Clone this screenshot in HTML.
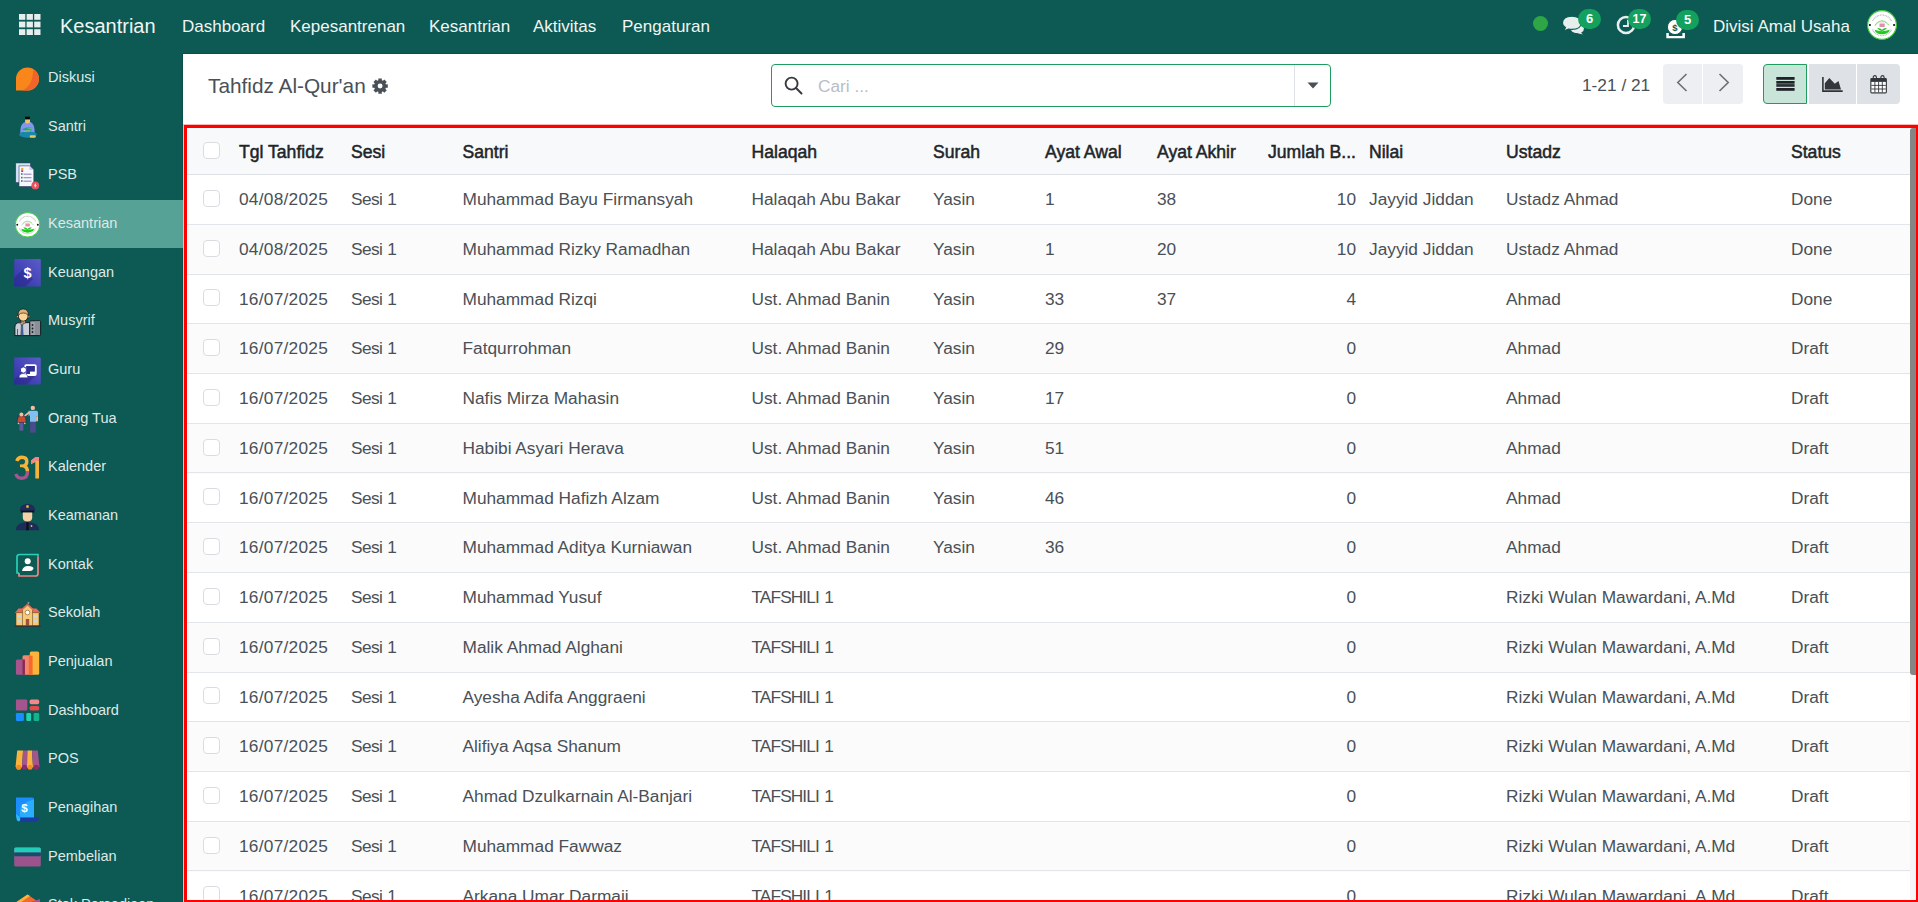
<!DOCTYPE html>
<html><head><meta charset="utf-8"><style>
*{box-sizing:border-box}
html,body{margin:0;padding:0}
body{width:1918px;height:902px;overflow:hidden;position:relative;font-family:"Liberation Sans",sans-serif;background:#fff;color:#495057}
.a{position:absolute;white-space:nowrap}
.nav{position:absolute;left:0;top:0;width:1918px;height:54px;background:#0d5953}
.nt{position:absolute;top:1px;height:53px;line-height:51px;color:#f0f5f4;font-size:17px}
.side{position:absolute;left:0;top:54px;width:183px;height:848px;background:#0d5953;overflow:hidden}
.si{position:absolute;left:0;width:183px;height:48.67px}
.si .ic{position:absolute;left:14px;top:9.5px;width:27px;height:27px}
.si .tx{position:absolute;left:48px;top:0px;line-height:47px;font-size:14.5px;color:#dfe9e7}
.si.act{background:#57a296;height:48px}
.cell{position:absolute;font-size:17.3px;color:#495057;line-height:20px}
.hd{position:absolute;font-size:17.6px;font-weight:normal;-webkit-text-stroke:0.5px #212529;color:#212529;line-height:20px}
.cb{position:absolute;left:203px;width:17px;height:17px;border:1px solid #d9dde2;border-radius:4px;background:#fff}
.badge{position:absolute;height:20px;border-radius:10px;background:#14a05d;color:#fff;font-size:13px;font-weight:bold;line-height:20px;text-align:center}
</style></head><body>

<div class="nav">
<svg class="a" style="left:19px;top:14px" width="22" height="21" viewBox="0 0 22 21"><rect x="0" y="0" width="6.3" height="5.8" fill="#e6efed"/><rect x="7.6" y="0" width="6.3" height="5.8" fill="#e6efed"/><rect x="15.2" y="0" width="6.3" height="5.8" fill="#e6efed"/><rect x="0" y="7.6" width="6.3" height="5.8" fill="#e6efed"/><rect x="7.6" y="7.6" width="6.3" height="5.8" fill="#e6efed"/><rect x="15.2" y="7.6" width="6.3" height="5.8" fill="#e6efed"/><rect x="0" y="15.2" width="6.3" height="5.8" fill="#e6efed"/><rect x="7.6" y="15.2" width="6.3" height="5.8" fill="#e6efed"/><rect x="15.2" y="15.2" width="6.3" height="5.8" fill="#e6efed"/></svg>
<div class="nt" style="left:60px;top:0px;font-size:20px;line-height:52px">Kesantrian</div>
<div class="nt" style="left:182px">Dashboard</div>
<div class="nt" style="left:290px">Kepesantrenan</div>
<div class="nt" style="left:429px">Kesantrian</div>
<div class="nt" style="left:533px">Aktivitas</div>
<div class="nt" style="left:622px">Pengaturan</div>
<div class="a" style="left:1533px;top:16px;width:15px;height:15px;border-radius:50%;background:#2fa645"></div>
<svg class="a" style="left:1561px;top:15px" width="26" height="22" viewBox="0 0 26 22"><path d="M9 13 Q9 8.5 16 8.5 Q23.5 8.5 23.5 13.5 Q23.5 16.5 21 17.8 L24 20.5 L16.5 18.8 Q9 18.5 9 13Z" fill="#e6efed" stroke="#0d5953" stroke-width="1.1"/><path d="M1.5 8 Q1.5 1.3 10.8 1.3 Q20 1.3 20 8 Q20 14.4 10.8 14.4 Q9 14.4 7.5 14 L2.5 16 L4.5 12.6 Q1.5 11 1.5 8Z" fill="#e6efed" stroke="#0d5953" stroke-width="1.1"/></svg>
<div class="badge" style="left:1578px;top:9px;width:23px">6</div>
<svg class="a" style="left:1616px;top:15px" width="20" height="20" viewBox="0 0 20 20"><circle cx="10" cy="10" r="8.1" fill="none" stroke="#e6efed" stroke-width="2.5"/><path d="M12 4.8 V11 H7" stroke="#e6efed" stroke-width="1.8" fill="none"/></svg>
<div class="badge" style="left:1628px;top:9px;width:23px;font-size:12.5px">17</div>
<svg class="a" style="left:1665px;top:19px" width="21" height="20" viewBox="0 0 21 20"><path d="M1.3 14 V19 Q1.3 19.3 1.8 19.3 H19.4 Q19.9 19.3 19.9 19 V14 H17.4 V16.9 H3.8 V14Z" fill="#fff"/><circle cx="10" cy="8" r="7.6" fill="#fff" stroke="#0d5953" stroke-width="1"/><text x="10" y="11.5" font-family="Liberation Sans" font-size="9.5" font-weight="bold" fill="#0d5953" text-anchor="middle">$</text></svg>
<div class="badge" style="left:1676px;top:10px;width:23px">5</div>
<div class="nt" style="left:1713px">Divisi Amal Usaha</div>
<svg class="a" style="left:1867px;top:9.5px" width="30" height="30" viewBox="0 0 30 30"><circle cx="15" cy="15" r="14.4" fill="#fff" stroke="#3ec93e" stroke-width="1.1"/><path d="M5.5 11 A10.5 10.5 0 0 1 24.5 11" fill="none" stroke="#9a9a9a" stroke-width="1.3" stroke-dasharray="0.9 0.7" opacity=".7"/><path d="M5.5 19.5 A10.5 10.5 0 0 0 24.5 19.5" fill="none" stroke="#9a9a9a" stroke-width="1.3" stroke-dasharray="0.9 0.7" opacity=".7"/><circle cx="2.9" cy="15" r="1.1" fill="#111"/><circle cx="27.1" cy="15" r="1.1" fill="#111"/><path d="M8 15.5 Q15 6.5 22 15.5" fill="none" stroke="#6fd86f" stroke-width="1.1" stroke-dasharray="1.2 .5"/><path d="M9.5 13 Q15 8.5 20.5 13" fill="none" stroke="#9fe39f" stroke-width=".8"/><rect x="12.5" y="13.6" width="5.2" height="3.4" fill="#e07aa0" opacity=".85"/><rect x="13" y="12.5" width="4.2" height="1.2" fill="#f2c6d6"/><path d="M10 17.8 Q15 18.5 15 20.5 Q15 18.5 20 17.8 Q18.5 20.5 15 21.3 Q11.5 20.5 10 17.8Z" fill="#22c922"/><path d="M7.7 19.8 Q15 22.5 22.8 19.8 Q21.5 24.2 15 24.3 Q8.5 24.2 7.7 19.8Z" fill="#1ecb1e"/></svg>
</div>
<div class="side"><div class="a" style="left:182px;top:0;width:1px;height:848px;background:#0a4f49"></div>
<div class="si" style="top:0.00px"><div class="ic"><svg width="27" height="27" viewBox="0 0 27 27" style="overflow:visible"><path d="M2 26.5 L2 15 A11.5 11.5 0 1 1 13.5 26.5 Z" fill="#f8861a"/><path d="M19.2 5 A11.5 11.5 0 0 1 13.5 26.5 L8 26.5 Q19 22 19.2 5Z" fill="#f2652a"/></svg></div><div class="tx">Diskusi</div></div>
<div class="si" style="top:48.67px"><div class="ic"><svg width="27" height="27" viewBox="0 0 27 27" style="overflow:visible"><path d="M6.3 21.5 Q6 11.2 11.2 9.9 H16.3 Q20.8 11.2 20.7 21.5Z" fill="#8296f0"/><rect x="11" y="4.7" width="4.8" height="2.9" fill="#050505"/><path d="M11.1 7.5 H16 V10.6 Q13.6 12.6 11.1 10.6Z" fill="#f0c466"/><path d="M7.7 17.3 L12.3 15.5 L18.3 15.8 L17.3 18.6 L12 18.8Z" fill="#2c9f7e"/><path d="M12.5 16.2 L18 15.9 L17.5 17.5Z" fill="#5cc48a"/><path d="M9.8 19.3 Q12 18.2 15.9 18.6 L15.5 20.9 H10.5Z" fill="#e8c460"/><ellipse cx="14" cy="22.6" rx="8.9" ry="3.2" fill="#1887a8"/><rect x="15.7" y="23.2" width="6.1" height="2.6" rx="1.1" fill="#e6c766"/></svg></div><div class="tx">Santri</div></div>
<div class="si" style="top:97.34px"><div class="ic"><svg width="27" height="27" viewBox="0 0 27 27" style="overflow:visible"><rect x="1.8" y="2" width="14.5" height="19.5" fill="#d5e6f6" stroke="#3a396a" stroke-width=".5"/><path d="M5 4.8 H15.5 L19.8 9 V25.5 H5Z" fill="#f6f6fc" stroke="#3a396a" stroke-width=".6"/><path d="M15.5 4.8 V9 H19.8Z" fill="#c8c8e8"/><circle cx="8.2" cy="8" r="1.3" fill="#e2b22a"/><rect x="7.2" y="9.3" width="2" height="1.6" fill="#b03355"/><rect x="7" y="12.2" width="1.6" height="1.6" fill="#3a7a6a"/><rect x="9.5" y="12.7" width="8" height=".9" fill="#7a70b0"/><rect x="7" y="15.8" width="1.6" height="1.6" fill="#3a7a6a"/><rect x="9.5" y="16.3" width="8" height=".9" fill="#7a70b0"/><rect x="7" y="19.2" width="1.6" height="1.6" fill="#3a7a6a"/><rect x="9.5" y="19.7" width="8" height=".9" fill="#7a70b0"/><circle cx="21.3" cy="24.4" r="3.9" fill="#e9515e"/><path d="M21.3 22 L22.4 24.4 L21.3 26.8 L20.2 24.4Z" fill="#dfe0f0"/></svg></div><div class="tx">PSB</div></div>
<div class="si act" style="top:146.01px"><div class="ic"><svg width="27" height="27" viewBox="0 0 27 27" style="overflow:visible"><g transform="translate(0.8 2) scale(0.85)"><circle cx="15" cy="15" r="14.4" fill="#fff" stroke="#3ec93e" stroke-width="1.1"/><path d="M5.5 11 A10.5 10.5 0 0 1 24.5 11" fill="none" stroke="#9a9a9a" stroke-width="1.3" stroke-dasharray="0.9 0.7" opacity=".7"/><path d="M5.5 19.5 A10.5 10.5 0 0 0 24.5 19.5" fill="none" stroke="#9a9a9a" stroke-width="1.3" stroke-dasharray="0.9 0.7" opacity=".7"/><circle cx="2.9" cy="15" r="1.1" fill="#111"/><circle cx="27.1" cy="15" r="1.1" fill="#111"/><path d="M8 15.5 Q15 6.5 22 15.5" fill="none" stroke="#6fd86f" stroke-width="1.1" stroke-dasharray="1.2 .5"/><path d="M9.5 13 Q15 8.5 20.5 13" fill="none" stroke="#9fe39f" stroke-width=".8"/><rect x="12.5" y="13.6" width="5.2" height="3.4" fill="#e07aa0" opacity=".85"/><rect x="13" y="12.5" width="4.2" height="1.2" fill="#f2c6d6"/><path d="M10 17.8 Q15 18.5 15 20.5 Q15 18.5 20 17.8 Q18.5 20.5 15 21.3 Q11.5 20.5 10 17.8Z" fill="#22c922"/><path d="M7.7 19.8 Q15 22.5 22.8 19.8 Q21.5 24.2 15 24.3 Q8.5 24.2 7.7 19.8Z" fill="#1ecb1e"/></g></svg></div><div class="tx">Kesantrian</div></div>
<div class="si" style="top:194.68px"><div class="ic"><svg width="27" height="27" viewBox="0 0 27 27" style="overflow:visible"><defs><linearGradient id="gk" x1="0" y1="1" x2="1" y2="0"><stop offset="0" stop-color="#3333aa"/><stop offset="1" stop-color="#5b5bc9"/></linearGradient></defs><rect x="0.2" y="1" width="26.6" height="27.5" rx="1" fill="url(#gk)"/><path d="M0.2 20 L9 11 L19 21 L11.5 28.5 L0.2 28.5Z" fill="#28288a" opacity=".55"/><text x="13.5" y="20.3" font-family="Liberation Sans" font-weight="bold" font-size="14.5" fill="#fff" text-anchor="middle">$</text></svg></div><div class="tx">Keuangan</div></div>
<div class="si" style="top:243.35px"><div class="ic"><svg width="27" height="27" viewBox="0 0 27 27" style="overflow:visible"><path d="M0.9 28.6 V20.5 Q0.9 15.6 5.5 15.6 H15.8 V28.6Z" fill="#c9cdd7" stroke="#111" stroke-width=".9"/><path d="M5.5 15.6 L8 19 L10.5 15.6Z" fill="#eef0f4" stroke="#111" stroke-width=".5"/><path d="M7.4 17.5 H8.6 L9.2 28.5 H6.8Z" fill="#4d72b3" stroke="#111" stroke-width=".4"/><path d="M3.5 22 V28.6" stroke="#111" stroke-width=".6"/><rect x="15.8" y="13.8" width="10.8" height="14.8" rx=".8" fill="#9ba1ab" stroke="#111" stroke-width=".9"/><rect x="21" y="14.5" width="5" height="13.5" fill="#8a9099"/><circle cx="18.5" cy="18" r=".9" fill="#222"/><circle cx="18.5" cy="21.5" r=".9" fill="#222"/><circle cx="18.5" cy="25" r=".9" fill="#222"/><rect x="7" y="12.5" width="4.5" height="3.5" fill="#f6c48a" stroke="#111" stroke-width=".6"/><circle cx="4" cy="9.5" r="1.3" fill="#f6c48a" stroke="#111" stroke-width=".5"/><circle cx="14.4" cy="9.5" r="1.3" fill="#f6c48a" stroke="#111" stroke-width=".5"/><ellipse cx="9.2" cy="8.6" rx="5" ry="5.6" fill="#f9d39a" stroke="#111" stroke-width=".9"/><path d="M4.2 8.5 Q3.8 2 9.2 2 Q14.6 2 14.2 8.5 Q12 5.5 9.2 6 Q6.4 5.5 4.2 8.5Z" fill="#e2b27c" stroke="#111" stroke-width=".6"/></svg></div><div class="tx">Musyrif</div></div>
<div class="si" style="top:292.02px"><div class="ic"><svg width="27" height="27" viewBox="0 0 27 27" style="overflow:visible"><defs><linearGradient id="gg" x1="0" y1="1" x2="1" y2="0"><stop offset="0" stop-color="#3232aa"/><stop offset="1" stop-color="#5b5bc9"/></linearGradient></defs><rect x="0.2" y="1.4" width="26.6" height="27" rx="1" fill="url(#gg)"/><path d="M0.2 24 L5 19 L8 13 L11 9 L21.8 9 V19.2 L12.8 28.4 H0.2Z" fill="#262680" opacity=".5"/><rect x="11.2" y="9.1" width="10.6" height="9.9" rx="1" fill="#2f2f95" stroke="#fff" stroke-width="1.8"/><rect x="16" y="15.6" width="5.2" height="3.3" fill="#fff"/><circle cx="9.4" cy="14" r="3.1" fill="#fff" stroke="#3838a8" stroke-width="1"/><path d="M5 21.8 Q5 17.6 9.4 17.6 Q13.8 17.6 13.8 21.8Z" fill="#fff" stroke="#3838a8" stroke-width=".6"/></svg></div><div class="tx">Guru</div></div>
<div class="si" style="top:340.69px"><div class="ic"><svg width="27" height="27" viewBox="0 0 27 27" style="overflow:visible"><circle cx="18.8" cy="3.9" r="2.2" fill="#f8bba0"/><rect x="16.1" y="17.6" width="5.7" height="11.1" fill="#4a4a8c"/><path d="M14.5 6.8 H22.5 Q24 6.8 24 8.5 V12 H22.2 V17.8 H16 V11 L14.5 12.5Z" fill="#7fc0f5"/><rect x="22.2" y="12" width="1.8" height="5.4" rx=".8" fill="#f8bba0"/><path d="M15 8.5 L9.5 12.8" stroke="#f8bba0" stroke-width="1.6" stroke-linecap="round"/><rect x="5.4" y="18" width="3.9" height="8.7" fill="#5a5a9c"/><path d="M4.5 12 H11 L12.2 17 L11.5 18.5 H3.8 L3.1 17Z" fill="#c94c2c" stroke="#1d2a5a" stroke-width=".6"/><circle cx="7.4" cy="10.4" r="2" fill="#f8bba0"/><circle cx="4.5" cy="19.4" r=".8" fill="#f8bba0"/><circle cx="10.8" cy="19.4" r=".8" fill="#f8bba0"/></svg></div><div class="tx">Orang Tua</div></div>
<div class="si" style="top:389.36px"><div class="ic"><svg width="27" height="27" viewBox="0 0 27 27" style="overflow:visible"><path d="M2.8 8 Q4 4.2 8 4.2 Q12.8 4.2 12.8 8.7 Q12.8 11.6 10 13 Q13.5 14.2 13.5 18.5" fill="none" stroke="#f6b33a" stroke-width="3.4"/><path d="M13.5 18.5 Q13.5 25.2 7.8 25.2 Q3 25.2 1.9 20.8" fill="none" stroke="#a7548f" stroke-width="3.4"/><path d="M6 12.8 H9.5" stroke="#f6b33a" stroke-width="2.8"/><path d="M17 7.5 L21.3 4.2 H25 V25.4 H21.3 V9 L17 11.2Z" fill="#f6b33a"/><path d="M17 7.5 L21.3 4.2 H25 V8 H21.3 L17 11.2Z" fill="#f2858a"/></svg></div><div class="tx">Kalender</div></div>
<div class="si" style="top:438.03px"><div class="ic"><svg width="27" height="27" viewBox="0 0 27 27" style="overflow:visible"><path d="M6 9 Q5 3 13.5 1.7 Q22 3 21 9Z" fill="#1d2c5b"/><rect x="12.3" y="3.2" width="2.4" height="2.6" rx=".6" fill="#f5c332"/><rect x="6.8" y="8.6" width="13.4" height="2" fill="#111"/><path d="M8.8 10.6 H18.2 V15.5 Q18.2 19.5 13.5 19.5 Q8.8 19.5 8.8 15.5Z" fill="#f6d0a7"/><path d="M1.7 28.2 Q2 20.5 13.5 20 Q25 20.5 25.2 28.2Z" fill="#1d2c5b"/><path d="M12.5 20 H14.5 L14.8 28.2 H12.2Z" fill="#111"/><circle cx="17.5" cy="24" r=".9" fill="#f5c332"/></svg></div><div class="tx">Keamanan</div></div>
<div class="si" style="top:486.70px"><div class="ic"><svg width="27" height="27" viewBox="0 0 27 27" style="overflow:visible"><path d="M24 6.5 V4.5 H5.5 Q3 4.5 3 7 V23 H5" fill="none" stroke="#27d0b9" stroke-width="1.7"/><path d="M24 6.5 V23.5 Q24 26 21.5 26 H5 V23" fill="none" stroke="#f28383" stroke-width="1.7"/><circle cx="13.7" cy="11.3" r="3" fill="#fff"/><path d="M8 21 Q9 16 14 16 Q19.5 16 19.5 18.5 Q18.5 21 16 21Z" fill="#fff"/></svg></div><div class="tx">Kontak</div></div>
<div class="si" style="top:535.37px"><div class="ic"><svg width="27" height="27" viewBox="0 0 27 27" style="overflow:visible"><path d="M0.8 14 L4.5 9.5 H22.5 L26.5 14Z" fill="#e96b5b"/><rect x="2" y="13.8" width="23" height="13" fill="#f6ca72" stroke="#5a3a20" stroke-width=".5"/><path d="M8.5 10.5 L13.5 6 L18.5 10.5 V26.8 H8.5Z" fill="#f6ca72" stroke="#5a3a20" stroke-width=".5"/><path d="M7.5 11 L13.5 5.5 L19.5 11" fill="none" stroke="#e96b5b" stroke-width="1.6"/><path d="M13.5 6 V2.8 L16 3.5" stroke="#555" stroke-width=".6" fill="#9ab"/><circle cx="13.5" cy="13.5" r="2.3" fill="#fff" stroke="#5a3a20" stroke-width=".5"/><rect x="11.8" y="20" width="3.4" height="6.8" fill="#9b5141"/><rect x="3.5" y="16" width="3.5" height="2.4" fill="#ccd6df"/><rect x="20" y="16" width="3.5" height="2.4" fill="#ccd6df"/><rect x="3.5" y="20.8" width="3.5" height="2.4" fill="#ccd6df"/><rect x="20" y="20.8" width="3.5" height="2.4" fill="#ccd6df"/><rect x="0.5" y="26.6" width="26.2" height="1.3" fill="#333"/></svg></div><div class="tx">Sekolah</div></div>
<div class="si" style="top:584.04px"><div class="ic"><svg width="27" height="27" viewBox="0 0 27 27" style="overflow:visible"><rect x="15.8" y="3.4" width="9.4" height="23.3" rx="1.5" fill="#fbb33c"/><rect x="8.5" y="7.3" width="9.5" height="19.4" rx="1.5" fill="#f4866f"/><rect x="14.8" y="7.8" width="3.8" height="18.9" fill="#f36b2b"/><rect x="1.9" y="11.5" width="9" height="15.2" rx="1.5" fill="#a5548e"/><rect x="8.5" y="11.5" width="2.4" height="15.2" fill="#8b2b4b"/></svg></div><div class="tx">Penjualan</div></div>
<div class="si" style="top:632.71px"><div class="ic"><svg width="27" height="27" viewBox="0 0 27 27" style="overflow:visible"><rect x="1.9" y="3.6" width="11.4" height="11" rx="1" fill="#a5548e"/><rect x="15.6" y="3.6" width="9.6" height="4.6" rx="1.6" fill="#f28a8b"/><rect x="15.6" y="10" width="9.6" height="4.6" rx="1.6" fill="#e64a4b"/><rect x="1.9" y="17" width="8" height="8" rx="1.2" fill="#1a8dff"/><rect x="12.3" y="17" width="4.8" height="8" rx="1.2" fill="#20d2b3"/><rect x="19.6" y="17" width="5.6" height="8" rx="1.2" fill="#13b48b"/></svg></div><div class="tx">Dashboard</div></div>
<div class="si" style="top:681.38px"><div class="ic"><svg width="27" height="27" viewBox="0 0 27 27" style="overflow:visible"><path d="M3.2 5.4 H9 L8 22 Q5 25 1.5 22Z" fill="#fbb33c"/><path d="M9 5.4 H13.5 L13 22 Q10.5 25 8 22Z" fill="#a5548e"/><path d="M13.5 5.4 H18 L19 22 Q16 25 13 22Z" fill="#fbb33c"/><path d="M18 5.4 H23.8 L25.5 22 Q22 25 19 22Z" fill="#a5548e"/><circle cx="4.7" cy="22.3" r="2.6" fill="#f58b22"/><circle cx="10.5" cy="22.3" r="2.5" fill="#8b2b6b"/><circle cx="16" cy="22.3" r="2.5" fill="#f58b22"/><circle cx="22.3" cy="22.3" r="2.6" fill="#8b2b6b"/></svg></div><div class="tx">POS</div></div>
<div class="si" style="top:730.05px"><div class="ic"><svg width="27" height="27" viewBox="0 0 27 27" style="overflow:visible"><path d="M2 3.4 H18.5 Q20 3.4 20 5 V23.5 H6 Q2 23.5 2 20Z" fill="#1a8dff"/><path d="M20 5.5 Q9 8 6 15 V24 H20Z" fill="#2fbaff" opacity=".75"/><path d="M6 23.5 H25.2 L24.5 26 Q23.5 27.4 21 27.4 H5 Q6.5 26 6 23.5Z" fill="#1b3ba2"/><path d="M2 20 Q2 27.4 5 27.4 Q7 26 6 23.5Z" fill="#2fbaff"/><text x="10.5" y="17.8" font-family="Liberation Sans" font-weight="bold" font-size="11.5" fill="#fff" text-anchor="middle">$</text></svg></div><div class="tx">Penagihan</div></div>
<div class="si" style="top:778.72px"><div class="ic"><svg width="27" height="27" viewBox="0 0 27 27" style="overflow:visible"><rect x="0.2" y="5.5" width="26.6" height="18.9" rx="1.5" fill="#9c538c"/><path d="M0.2 7 Q0.2 5.5 1.7 5.5 H25.3 Q26.8 5.5 26.8 7 V10.5 H0.2Z" fill="#20cfb9"/><path d="M0.2 10.5 H26.8 V13.5 Q26.8 14.2 26 14.2 H1 Q0.2 14.2 0.2 13.5Z" fill="#0e506b"/></svg></div><div class="tx">Pembelian</div></div>
<div class="si" style="top:827.39px"><div class="ic"><svg width="27" height="27" viewBox="0 0 27 27" style="overflow:visible"><path d="M1 12 L13.5 3.4 L26 12 L13.5 20Z" fill="#f26b2b"/><path d="M1 12 L13.5 3.4 L16 5 L3.5 13.6Z" fill="#fbb33c"/><path d="M13.5 12 L26 8 V26 H13.5Z" fill="#a5548e"/></svg></div><div class="tx">Stok Persediaan</div></div>
</div>
<div class="a" style="left:182px;top:53px;width:1736px;height:1px;background:#0a4f49"></div>
<div class="a" style="left:208px;top:72px;font-size:20.8px;line-height:28px;color:#495057">Tahfidz Al-Qur'an</div>
<svg class="a" style="left:371.8px;top:78px" width="16.2" height="16.2" viewBox="0 0 17 17"><path fill="#495057" d="M14.24 6.75 L16.59 6.63 L16.59 10.37 L14.24 10.25 L13.80 11.32 L15.54 12.90 L12.90 15.54 L11.32 13.80 L10.25 14.24 L10.37 16.59 L6.63 16.59 L6.75 14.24 L5.68 13.80 L4.10 15.54 L1.46 12.90 L3.20 11.32 L2.76 10.25 L0.41 10.37 L0.41 6.63 L2.76 6.75 L3.20 5.68 L1.46 4.10 L4.10 1.46 L5.68 3.20 L6.75 2.76 L6.63 0.41 L10.37 0.41 L10.25 2.76 L11.32 3.20 L12.90 1.46 L15.54 4.10 L13.80 5.68Z"/><circle cx="8.5" cy="8.5" r="6.3" fill="#495057"/><circle cx="8.5" cy="8.5" r="2.6" fill="#fff"/></svg>
<div class="a" style="left:771px;top:64px;width:560px;height:43px;border:1px solid #1f9d5f;border-radius:4px;background:#fff"></div>
<div class="a" style="left:1294px;top:65px;width:1px;height:41px;background:#dee2e6"></div>
<svg class="a" style="left:784px;top:76px" width="19" height="19" viewBox="0 0 19 19"><circle cx="7.6" cy="7.6" r="6" fill="none" stroke="#343a40" stroke-width="1.9"/><path d="M12 12 L17.5 17.5" stroke="#343a40" stroke-width="2" stroke-linecap="round"/></svg>
<div class="a" style="left:818px;top:75px;font-size:17.3px;line-height:22px;color:#b7bec6">Cari ...</div>
<svg class="a" style="left:1307px;top:82px" width="12" height="7" viewBox="0 0 12 7"><path d="M0.5 0.5 H11.5 L6 6.5Z" fill="#495057"/></svg>
<div class="a" style="left:1582px;top:74px;font-size:17.3px;line-height:22px;color:#495057">1-21 / 21</div>
<div class="a" style="left:1663px;top:64px;width:39px;height:40px;background:#edeff2;border-radius:4px 0 0 4px"></div>
<div class="a" style="left:1703px;top:64px;width:40px;height:40px;background:#edeff2;border-radius:0 4px 4px 0"></div>
<svg class="a" style="left:1676px;top:73px" width="12" height="19" viewBox="0 0 12 19"><path d="M10.5 1 L1.8 9.5 L10.5 18" fill="none" stroke="#6c6f73" stroke-width="1.6"/></svg>
<svg class="a" style="left:1717.5px;top:73px" width="12" height="19" viewBox="0 0 12 19"><path d="M1.5 1 L10.2 9.5 L1.5 18" fill="none" stroke="#6c6f73" stroke-width="1.6"/></svg>
<div class="a" style="left:1763px;top:64px;width:44px;height:40px;background:#c9e5da;border:1px solid #1f9d5f;border-radius:4px 0 0 4px"></div>
<div class="a" style="left:1809px;top:64px;width:47px;height:40px;background:#dee1e5"></div>
<div class="a" style="left:1857px;top:64px;width:43px;height:40px;background:#dee1e5;border-radius:0 4px 4px 0"></div>
<svg class="a" style="left:1776px;top:77px" width="19" height="14" viewBox="0 0 19 14"><rect x="0.3" y="0" width="18.3" height="2.8" fill="#1f2226"/><rect x="0.3" y="4" width="18.3" height="2.7" fill="#1f2226"/><rect x="0.3" y="7.1" width="18.3" height="2.7" fill="#2a2e33"/><rect x="0.3" y="11" width="18.3" height="2.8" fill="#1f2226"/></svg>
<svg class="a" style="left:1821px;top:76px" width="22" height="16" viewBox="0 0 22 16"><path d="M1.9 0.9 V15.1 H21.7" fill="none" stroke="#2f3338" stroke-width="1.6"/><path d="M3.8 13.6 V7.3 L8.3 2 L13.8 7.8 L17.5 5 L20 13.6Z" fill="#33373c"/></svg>
<svg class="a" style="left:1869px;top:75px" width="19" height="19" viewBox="0 0 19 19"><rect x="1.3" y="3.1" width="16.6" height="15.3" rx="1.3" fill="#33373c"/><rect x="2.4" y="6.9" width="14.4" height="10.4" fill="#fff"/><path d="M5.9 6.9 V17.3 M9.6 6.9 V17.3 M13.3 6.9 V17.3 M2.4 10.4 H16.8 M2.4 14 H16.8" stroke="#33373c" stroke-width=".9"/><rect x="4.2" y="0.6" width="3.2" height="4.8" rx="1.6" fill="none" stroke="#33373c" stroke-width="1.1"/><rect x="11.9" y="0.6" width="3.2" height="4.8" rx="1.6" fill="none" stroke="#33373c" stroke-width="1.1"/></svg>
<div class="a" style="left:187px;top:128px;width:1723px;height:46px;background:#f8f9fa"></div>
<div class="a" style="left:187px;top:174px;width:1723px;height:1px;background:#dee2e6"></div>
<div class="cb" style="top:142px"></div>
<div class="hd" style="left:239px;top:141.5px">Tgl Tahfidz</div>
<div class="hd" style="left:351px;top:141.5px">Sesi</div>
<div class="hd" style="left:462.5px;top:141.5px">Santri</div>
<div class="hd" style="left:751.5px;top:141.5px">Halaqah</div>
<div class="hd" style="left:933px;top:141.5px">Surah</div>
<div class="hd" style="left:1045px;top:141.5px">Ayat Awal</div>
<div class="hd" style="left:1157px;top:141.5px">Ayat Akhir</div>
<div class="hd" style="left:1268px;top:141.5px">Jumlah B...</div>
<div class="hd" style="left:1369px;top:141.5px">Nilai</div>
<div class="hd" style="left:1506px;top:141.5px">Ustadz</div>
<div class="hd" style="left:1791px;top:141.5px">Status</div>
<div class="a" style="left:187px;top:175.00px;width:1723px;height:49.75px;background:#fff"></div>
<div class="a" style="left:187px;top:224px;width:1723px;height:1px;background:#e2e5e9"></div>
<div class="cb" style="top:189.88px"></div>
<div class="cell" style="left:239px;top:189.07px;letter-spacing:0.25px">04/08/2025</div>
<div class="cell" style="left:351px;top:189.07px;letter-spacing:-0.6px;word-spacing:0.8px">Sesi 1</div>
<div class="cell" style="left:462.5px;top:189.07px">Muhammad Bayu Firmansyah</div>
<div class="cell" style="left:751.5px;top:189.07px">Halaqah Abu Bakar</div>
<div class="cell" style="left:933px;top:189.07px">Yasin</div>
<div class="cell" style="left:1045px;top:189.07px">1</div>
<div class="cell" style="left:1157px;top:189.07px">38</div>
<div class="cell" style="left:1200px;width:156px;text-align:right;top:189.07px">10</div>
<div class="cell" style="left:1369px;top:189.07px">Jayyid Jiddan</div>
<div class="cell" style="left:1506px;top:189.07px">Ustadz Ahmad</div>
<div class="cell" style="left:1791px;top:189.07px">Done</div>
<div class="a" style="left:187px;top:224.75px;width:1723px;height:49.75px;background:#fbfbfb"></div>
<div class="a" style="left:187px;top:274px;width:1723px;height:1px;background:#e2e5e9"></div>
<div class="cb" style="top:239.62px"></div>
<div class="cell" style="left:239px;top:238.82px;letter-spacing:0.25px">04/08/2025</div>
<div class="cell" style="left:351px;top:238.82px;letter-spacing:-0.6px;word-spacing:0.8px">Sesi 1</div>
<div class="cell" style="left:462.5px;top:238.82px">Muhammad Rizky Ramadhan</div>
<div class="cell" style="left:751.5px;top:238.82px">Halaqah Abu Bakar</div>
<div class="cell" style="left:933px;top:238.82px">Yasin</div>
<div class="cell" style="left:1045px;top:238.82px">1</div>
<div class="cell" style="left:1157px;top:238.82px">20</div>
<div class="cell" style="left:1200px;width:156px;text-align:right;top:238.82px">10</div>
<div class="cell" style="left:1369px;top:238.82px">Jayyid Jiddan</div>
<div class="cell" style="left:1506px;top:238.82px">Ustadz Ahmad</div>
<div class="cell" style="left:1791px;top:238.82px">Done</div>
<div class="a" style="left:187px;top:274.50px;width:1723px;height:49.75px;background:#fff"></div>
<div class="a" style="left:187px;top:323px;width:1723px;height:1px;background:#e2e5e9"></div>
<div class="cb" style="top:289.38px"></div>
<div class="cell" style="left:239px;top:288.57px;letter-spacing:0.25px">16/07/2025</div>
<div class="cell" style="left:351px;top:288.57px;letter-spacing:-0.6px;word-spacing:0.8px">Sesi 1</div>
<div class="cell" style="left:462.5px;top:288.57px">Muhammad Rizqi</div>
<div class="cell" style="left:751.5px;top:288.57px">Ust. Ahmad Banin</div>
<div class="cell" style="left:933px;top:288.57px">Yasin</div>
<div class="cell" style="left:1045px;top:288.57px">33</div>
<div class="cell" style="left:1157px;top:288.57px">37</div>
<div class="cell" style="left:1200px;width:156px;text-align:right;top:288.57px">4</div>
<div class="cell" style="left:1506px;top:288.57px">Ahmad</div>
<div class="cell" style="left:1791px;top:288.57px">Done</div>
<div class="a" style="left:187px;top:324.25px;width:1723px;height:49.75px;background:#fbfbfb"></div>
<div class="a" style="left:187px;top:373px;width:1723px;height:1px;background:#e2e5e9"></div>
<div class="cb" style="top:339.12px"></div>
<div class="cell" style="left:239px;top:338.32px;letter-spacing:0.25px">16/07/2025</div>
<div class="cell" style="left:351px;top:338.32px;letter-spacing:-0.6px;word-spacing:0.8px">Sesi 1</div>
<div class="cell" style="left:462.5px;top:338.32px">Fatqurrohman</div>
<div class="cell" style="left:751.5px;top:338.32px">Ust. Ahmad Banin</div>
<div class="cell" style="left:933px;top:338.32px">Yasin</div>
<div class="cell" style="left:1045px;top:338.32px">29</div>
<div class="cell" style="left:1200px;width:156px;text-align:right;top:338.32px">0</div>
<div class="cell" style="left:1506px;top:338.32px">Ahmad</div>
<div class="cell" style="left:1791px;top:338.32px">Draft</div>
<div class="a" style="left:187px;top:374.00px;width:1723px;height:49.75px;background:#fff"></div>
<div class="a" style="left:187px;top:423px;width:1723px;height:1px;background:#e2e5e9"></div>
<div class="cb" style="top:388.88px"></div>
<div class="cell" style="left:239px;top:388.07px;letter-spacing:0.25px">16/07/2025</div>
<div class="cell" style="left:351px;top:388.07px;letter-spacing:-0.6px;word-spacing:0.8px">Sesi 1</div>
<div class="cell" style="left:462.5px;top:388.07px">Nafis Mirza Mahasin</div>
<div class="cell" style="left:751.5px;top:388.07px">Ust. Ahmad Banin</div>
<div class="cell" style="left:933px;top:388.07px">Yasin</div>
<div class="cell" style="left:1045px;top:388.07px">17</div>
<div class="cell" style="left:1200px;width:156px;text-align:right;top:388.07px">0</div>
<div class="cell" style="left:1506px;top:388.07px">Ahmad</div>
<div class="cell" style="left:1791px;top:388.07px">Draft</div>
<div class="a" style="left:187px;top:423.75px;width:1723px;height:49.75px;background:#fbfbfb"></div>
<div class="a" style="left:187px;top:472px;width:1723px;height:1px;background:#e2e5e9"></div>
<div class="cb" style="top:438.62px"></div>
<div class="cell" style="left:239px;top:437.82px;letter-spacing:0.25px">16/07/2025</div>
<div class="cell" style="left:351px;top:437.82px;letter-spacing:-0.6px;word-spacing:0.8px">Sesi 1</div>
<div class="cell" style="left:462.5px;top:437.82px">Habibi Asyari Herava</div>
<div class="cell" style="left:751.5px;top:437.82px">Ust. Ahmad Banin</div>
<div class="cell" style="left:933px;top:437.82px">Yasin</div>
<div class="cell" style="left:1045px;top:437.82px">51</div>
<div class="cell" style="left:1200px;width:156px;text-align:right;top:437.82px">0</div>
<div class="cell" style="left:1506px;top:437.82px">Ahmad</div>
<div class="cell" style="left:1791px;top:437.82px">Draft</div>
<div class="a" style="left:187px;top:473.50px;width:1723px;height:49.75px;background:#fff"></div>
<div class="a" style="left:187px;top:522px;width:1723px;height:1px;background:#e2e5e9"></div>
<div class="cb" style="top:488.38px"></div>
<div class="cell" style="left:239px;top:487.57px;letter-spacing:0.25px">16/07/2025</div>
<div class="cell" style="left:351px;top:487.57px;letter-spacing:-0.6px;word-spacing:0.8px">Sesi 1</div>
<div class="cell" style="left:462.5px;top:487.57px">Muhammad Hafizh Alzam</div>
<div class="cell" style="left:751.5px;top:487.57px">Ust. Ahmad Banin</div>
<div class="cell" style="left:933px;top:487.57px">Yasin</div>
<div class="cell" style="left:1045px;top:487.57px">46</div>
<div class="cell" style="left:1200px;width:156px;text-align:right;top:487.57px">0</div>
<div class="cell" style="left:1506px;top:487.57px">Ahmad</div>
<div class="cell" style="left:1791px;top:487.57px">Draft</div>
<div class="a" style="left:187px;top:523.25px;width:1723px;height:49.75px;background:#fbfbfb"></div>
<div class="a" style="left:187px;top:572px;width:1723px;height:1px;background:#e2e5e9"></div>
<div class="cb" style="top:538.12px"></div>
<div class="cell" style="left:239px;top:537.33px;letter-spacing:0.25px">16/07/2025</div>
<div class="cell" style="left:351px;top:537.33px;letter-spacing:-0.6px;word-spacing:0.8px">Sesi 1</div>
<div class="cell" style="left:462.5px;top:537.33px">Muhammad Aditya Kurniawan</div>
<div class="cell" style="left:751.5px;top:537.33px">Ust. Ahmad Banin</div>
<div class="cell" style="left:933px;top:537.33px">Yasin</div>
<div class="cell" style="left:1045px;top:537.33px">36</div>
<div class="cell" style="left:1200px;width:156px;text-align:right;top:537.33px">0</div>
<div class="cell" style="left:1506px;top:537.33px">Ahmad</div>
<div class="cell" style="left:1791px;top:537.33px">Draft</div>
<div class="a" style="left:187px;top:573.00px;width:1723px;height:49.75px;background:#fff"></div>
<div class="a" style="left:187px;top:622px;width:1723px;height:1px;background:#e2e5e9"></div>
<div class="cb" style="top:587.88px"></div>
<div class="cell" style="left:239px;top:587.08px;letter-spacing:0.25px">16/07/2025</div>
<div class="cell" style="left:351px;top:587.08px;letter-spacing:-0.6px;word-spacing:0.8px">Sesi 1</div>
<div class="cell" style="left:462.5px;top:587.08px">Muhammad Yusuf</div>
<div class="cell" style="left:751.5px;top:587.08px;letter-spacing:-0.9px;word-spacing:1.5px">TAFSHILI 1</div>
<div class="cell" style="left:1200px;width:156px;text-align:right;top:587.08px">0</div>
<div class="cell" style="left:1506px;top:587.08px">Rizki Wulan Mawardani, A.Md</div>
<div class="cell" style="left:1791px;top:587.08px">Draft</div>
<div class="a" style="left:187px;top:622.75px;width:1723px;height:49.75px;background:#fbfbfb"></div>
<div class="a" style="left:187px;top:672px;width:1723px;height:1px;background:#e2e5e9"></div>
<div class="cb" style="top:637.62px"></div>
<div class="cell" style="left:239px;top:636.83px;letter-spacing:0.25px">16/07/2025</div>
<div class="cell" style="left:351px;top:636.83px;letter-spacing:-0.6px;word-spacing:0.8px">Sesi 1</div>
<div class="cell" style="left:462.5px;top:636.83px">Malik Ahmad Alghani</div>
<div class="cell" style="left:751.5px;top:636.83px;letter-spacing:-0.9px;word-spacing:1.5px">TAFSHILI 1</div>
<div class="cell" style="left:1200px;width:156px;text-align:right;top:636.83px">0</div>
<div class="cell" style="left:1506px;top:636.83px">Rizki Wulan Mawardani, A.Md</div>
<div class="cell" style="left:1791px;top:636.83px">Draft</div>
<div class="a" style="left:187px;top:672.50px;width:1723px;height:49.75px;background:#fff"></div>
<div class="a" style="left:187px;top:721px;width:1723px;height:1px;background:#e2e5e9"></div>
<div class="cb" style="top:687.38px"></div>
<div class="cell" style="left:239px;top:686.58px;letter-spacing:0.25px">16/07/2025</div>
<div class="cell" style="left:351px;top:686.58px;letter-spacing:-0.6px;word-spacing:0.8px">Sesi 1</div>
<div class="cell" style="left:462.5px;top:686.58px">Ayesha Adifa Anggraeni</div>
<div class="cell" style="left:751.5px;top:686.58px;letter-spacing:-0.9px;word-spacing:1.5px">TAFSHILI 1</div>
<div class="cell" style="left:1200px;width:156px;text-align:right;top:686.58px">0</div>
<div class="cell" style="left:1506px;top:686.58px">Rizki Wulan Mawardani, A.Md</div>
<div class="cell" style="left:1791px;top:686.58px">Draft</div>
<div class="a" style="left:187px;top:722.25px;width:1723px;height:49.75px;background:#fbfbfb"></div>
<div class="a" style="left:187px;top:771px;width:1723px;height:1px;background:#e2e5e9"></div>
<div class="cb" style="top:737.12px"></div>
<div class="cell" style="left:239px;top:736.33px;letter-spacing:0.25px">16/07/2025</div>
<div class="cell" style="left:351px;top:736.33px;letter-spacing:-0.6px;word-spacing:0.8px">Sesi 1</div>
<div class="cell" style="left:462.5px;top:736.33px">Alifiya Aqsa Shanum</div>
<div class="cell" style="left:751.5px;top:736.33px;letter-spacing:-0.9px;word-spacing:1.5px">TAFSHILI 1</div>
<div class="cell" style="left:1200px;width:156px;text-align:right;top:736.33px">0</div>
<div class="cell" style="left:1506px;top:736.33px">Rizki Wulan Mawardani, A.Md</div>
<div class="cell" style="left:1791px;top:736.33px">Draft</div>
<div class="a" style="left:187px;top:772.00px;width:1723px;height:49.75px;background:#fff"></div>
<div class="a" style="left:187px;top:821px;width:1723px;height:1px;background:#e2e5e9"></div>
<div class="cb" style="top:786.88px"></div>
<div class="cell" style="left:239px;top:786.08px;letter-spacing:0.25px">16/07/2025</div>
<div class="cell" style="left:351px;top:786.08px;letter-spacing:-0.6px;word-spacing:0.8px">Sesi 1</div>
<div class="cell" style="left:462.5px;top:786.08px">Ahmad Dzulkarnain Al-Banjari</div>
<div class="cell" style="left:751.5px;top:786.08px;letter-spacing:-0.9px;word-spacing:1.5px">TAFSHILI 1</div>
<div class="cell" style="left:1200px;width:156px;text-align:right;top:786.08px">0</div>
<div class="cell" style="left:1506px;top:786.08px">Rizki Wulan Mawardani, A.Md</div>
<div class="cell" style="left:1791px;top:786.08px">Draft</div>
<div class="a" style="left:187px;top:821.75px;width:1723px;height:49.75px;background:#fbfbfb"></div>
<div class="a" style="left:187px;top:870px;width:1723px;height:1px;background:#e2e5e9"></div>
<div class="cb" style="top:836.62px"></div>
<div class="cell" style="left:239px;top:835.83px;letter-spacing:0.25px">16/07/2025</div>
<div class="cell" style="left:351px;top:835.83px;letter-spacing:-0.6px;word-spacing:0.8px">Sesi 1</div>
<div class="cell" style="left:462.5px;top:835.83px">Muhammad Fawwaz</div>
<div class="cell" style="left:751.5px;top:835.83px;letter-spacing:-0.9px;word-spacing:1.5px">TAFSHILI 1</div>
<div class="cell" style="left:1200px;width:156px;text-align:right;top:835.83px">0</div>
<div class="cell" style="left:1506px;top:835.83px">Rizki Wulan Mawardani, A.Md</div>
<div class="cell" style="left:1791px;top:835.83px">Draft</div>
<div class="a" style="left:187px;top:871.50px;width:1723px;height:49.75px;background:#fff"></div>
<div class="a" style="left:187px;top:920px;width:1723px;height:1px;background:#e2e5e9"></div>
<div class="cb" style="top:886.38px"></div>
<div class="cell" style="left:239px;top:885.58px;letter-spacing:0.25px">16/07/2025</div>
<div class="cell" style="left:351px;top:885.58px;letter-spacing:-0.6px;word-spacing:0.8px">Sesi 1</div>
<div class="cell" style="left:462.5px;top:885.58px">Arkana Umar Darmaji</div>
<div class="cell" style="left:751.5px;top:885.58px;letter-spacing:-0.9px;word-spacing:1.5px">TAFSHILI 1</div>
<div class="cell" style="left:1200px;width:156px;text-align:right;top:885.58px">0</div>
<div class="cell" style="left:1506px;top:885.58px">Rizki Wulan Mawardani, A.Md</div>
<div class="cell" style="left:1791px;top:885.58px">Draft</div>
<div class="a" style="left:1910px;top:128px;width:6px;height:774px;background:#f5f6f7"></div>
<div class="a" style="left:1910px;top:128px;width:6px;height:547px;background:#858585;border-radius:3px 0 0 3px"></div>
<div class="a" style="left:184px;top:125px;width:1735px;height:778px;border:3px solid #ff0000;box-shadow:-1px -1px 0 #ffb3b3"></div>
</body></html>
